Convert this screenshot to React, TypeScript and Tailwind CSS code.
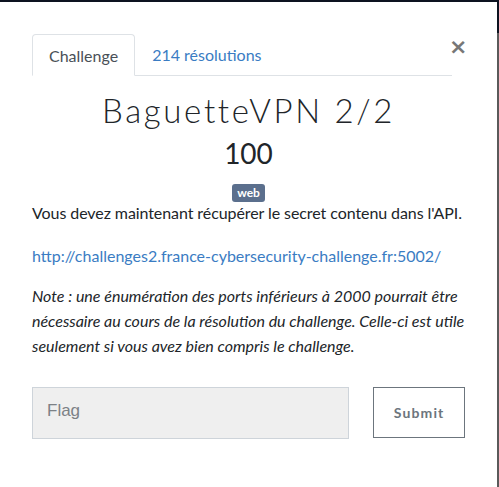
export default function App() {
  return (
    <div className="w-[499px] h-[487px] bg-[#0d1320] overflow-hidden" style={{ fontFamily: "Lato, 'Noto Sans', sans-serif" }}>
      <div className="mt-[2px] w-[497px] h-[485px] bg-white relative">
        <div className="absolute right-[-2px] top-[31px] w-[2px] h-[454px] bg-[#5a5a5a]" />
        <button className="absolute left-[449px] top-[34px] text-[#777] text-[22px] leading-none font-bold" style={{ fontFamily: "'DejaVu Sans', sans-serif" }}>×</button>
        <div className="pt-[32px] px-[32px]">
          <div className="flex w-[420px] border-b border-[#dee2e6] h-[42px]">
            <div className="px-[16px] pt-[9px] h-[42px] border border-[#dee2e6] border-b-white rounded-t-[4px] text-[#495057] text-[16px] mb-[-1px] bg-white">Challenge</div>
            <div className="px-[17px] pt-[9px] text-[#3a7cc3] text-[16px]">214 résolutions</div>
          </div>
          <div className="w-[433px]">
            <h1 className="text-center text-[#212529] text-[33px] font-light tracking-[0.08em] mt-[14px] leading-[40px]">BaguetteVPN 2/2</h1>
            <div className="text-center text-[#212529] text-[28px] leading-[34px] mt-[6px]">100</div>
            <div className="flex justify-center mt-[14px]">
              <span className="bg-[#5b6f8d] text-white text-[12px] font-bold leading-[18px] px-[5px] rounded-[3px]">web</span>
            </div>
            <p className="text-[#212529] text-[16px] leading-[24px] mt-[-1px] whitespace-nowrap tracking-[-0.005em]">Vous devez maintenant récupérer le secret contenu dans l'API.</p>
            <p className="mt-[19px] text-[16px] leading-[24px] text-[#3a7cc3]">http://challenges2.france-cybersecurity-challenge.fr:5002/</p>
            <p className="mt-[15px] text-[16px] leading-[25px] italic text-[#212529]">Note : une énumération des ports inférieurs à 2000 pourrait être nécessaire au cours de la résolution du challenge. Celle-ci est utile seulement si vous avez bien compris le challenge.</p>
            <div className="flex mt-[29px] items-start">
              <div className="w-[318px] h-[52px] bg-[#efefef] border border-[#ced4da] flex items-center pl-[14px] pb-[4px] text-[#7c8186] text-[17px]" style={{ fontFamily: "'Liberation Sans', Arial, sans-serif" }}>Flag</div>
              <button className="ml-[24px] w-[92px] h-[51px] border border-[#6c757d] text-[#6c757d] text-[14px] font-bold tracking-[0.08em]">Submit</button>
            </div>
          </div>
        </div>
      </div>
    </div>
  );
}
